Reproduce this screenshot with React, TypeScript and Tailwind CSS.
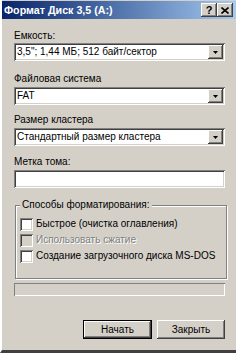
import React from 'react';

const font = "font-['Liberation_Sans',Arial,sans-serif]";
const sunken =
  'shadow-[inset_1px_1px_0_#808080,inset_-1px_-1px_0_#ffffff,inset_2px_2px_0_#404040,inset_-2px_-2px_0_#d4d0c8]';
const raised =
  'shadow-[inset_-1px_-1px_0_#404040,inset_1px_1px_0_#ffffff,inset_-2px_-2px_0_#808080,inset_2px_2px_0_#d4d0c8]';

function Combo({ value }: { value: string }) {
  return (
    <div className={`ml-[12px] mr-[11px] h-[18px] flex items-center bg-white ${sunken} px-[2px]`}>
      <span className="flex-1 pl-[1px] text-[10px] leading-[12px] text-black whitespace-nowrap overflow-hidden">
        {value}
      </span>
      <span className={`w-[15px] h-[14px] bg-[#d4d0c8] ${raised} flex items-center justify-center`}>
        <svg width="5" height="3" viewBox="0 0 5 3">
          <path d="M0 0h5L2.5 3z" fill="#000" />
        </svg>
      </span>
    </div>
  );
}

function Check({ label, disabled }: { label: string; disabled?: boolean }) {
  return (
    <div className="flex items-center h-[16px]">
      <span className={`shrink-0 w-[13px] h-[13px] ${disabled ? 'bg-[#d4d0c8]' : 'bg-white'} ${sunken}`} />
      <span
        className={`ml-[3px] text-[10px] leading-[12px] whitespace-nowrap ${
          disabled ? 'text-[#808080] [text-shadow:1px_1px_0_#fff]' : 'text-black'
        }`}
      >
        {label}
      </span>
    </div>
  );
}

export default function App() {
  return (
    <div
      className={`${font} w-[236px] h-[353px] bg-[#d4d0c8] flex flex-col overflow-hidden border-l-2 border-l-white border-b-[3px] border-b-[#404040] pt-[1px]`}
    >
      <div className="h-[18px] flex items-center bg-gradient-to-r from-[#0a246a] to-[#a6caf0] pl-[2px] pr-[3px]">
        <span className="flex-1 text-white font-bold text-[10.7px] leading-[13px] whitespace-nowrap">
          Формат Диск 3,5 (A:)
        </span>
        <span
          className={`w-[16px] h-[14px] bg-[#d4d0c8] ${raised} flex items-center justify-center text-[11px] font-bold leading-none`}
        >
          ?
        </span>
        <span className={`w-[16px] h-[14px] bg-[#d4d0c8] ${raised} flex items-center justify-center`}>
          <svg width="8" height="7" viewBox="0 0 8 7">
            <path d="M0.5 0.5L7.5 6.5M7.5 0.5L0.5 6.5" stroke="#000" strokeWidth="1.6" />
          </svg>
        </span>
      </div>

      <div className="pl-[12px] mt-[11px] h-[13px] text-[10px] leading-[12px]">Емкость:</div>
      <Combo value={'3,5"; 1,44 МБ; 512 байт/сектор'} />

      <div className="pl-[12px] mt-[12px] h-[14px] text-[10px] leading-[12px]">Файловая система</div>
      <Combo value="FAT" />

      <div className="pl-[12px] mt-[9px] h-[14px] text-[10px] leading-[12px]">Размер кластера</div>
      <Combo value="Стандартный размер кластера" />

      <div className="pl-[12px] mt-[10px] h-[14px] text-[10px] leading-[12px]">Метка тома:</div>
      <div className={`ml-[12px] mr-[11px] h-[18px] bg-white ${sunken}`} />

      <div className="relative ml-[13px] mr-[9px] mt-[17px] h-[74px] border border-[#808080] shadow-[1px_1px_0_#fff,inset_1px_1px_0_#fff] pl-[4px] pt-[10px]">
        <span className="absolute left-[4px] top-[-7px] px-[2px] bg-[#d4d0c8] text-[10px] leading-[12px]">
          Способы форматирования:
        </span>
        <Check label="Быстрое (очистка оглавления)" />
        <Check label="Использовать сжатие" disabled />
        <Check label="Создание загрузочного диска MS-DOS" />
      </div>

      <div className="ml-[12px] mr-[11px] mt-[4px] h-[13px] shadow-[inset_1px_1px_0_#808080,inset_-1px_-1px_0_#ffffff]" />

      <div className="mt-[24px] flex justify-end gap-[5px] pr-[11px]">
        <button className="w-[69px] h-[19px] border border-black p-0">
          <span className={`w-full h-full flex items-center justify-center text-[10px] ${raised}`}>Начать</span>
        </button>
        <button className={`w-[68px] h-[19px] flex items-center justify-center text-[10px] ${raised}`}>
          Закрыть
        </button>
      </div>
    </div>
  );
}
